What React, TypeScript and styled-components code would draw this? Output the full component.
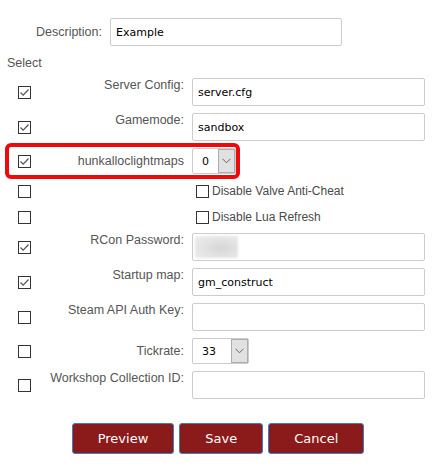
import React from "react";
import styled, { createGlobalStyle } from "styled-components";

type Field = {
  checked: boolean;
  label?: string;
  kind: "text" | "password" | "select" | "toggle";
  value?: string;
  width?: number;
  highlight?: boolean;
};

const fields: Field[] = [
  { checked: true, label: "Server Config:", kind: "text", value: "server.cfg" },
  { checked: true, label: "Gamemode:", kind: "text", value: "sandbox" },
  { checked: true, label: "hunkalloclightmaps", kind: "select", value: "0", width: 44, highlight: true },
  { checked: false, label: "Disable Valve Anti-Cheat", kind: "toggle" },
  { checked: false, label: "Disable Lua Refresh", kind: "toggle" },
  { checked: true, label: "RCon Password:", kind: "password" },
  { checked: true, label: "Startup map:", kind: "text", value: "gm_construct" },
  { checked: false, label: "Steam API Auth Key:", kind: "text", value: "" },
  { checked: false, label: "Tickrate:", kind: "select", value: "33", width: 57 },
  { checked: false, label: "Workshop Collection ID:", kind: "text", value: "" },
];

const CheckBox = ({ checked }: { checked: boolean }) => (
  <Box>
    {checked && (
      <svg width="11" height="11" viewBox="0 0 11 11">
        <polyline points="1.5,5.5 4.2,8.2 9.5,2.5" fill="none" stroke="#555" strokeWidth="1.2" />
      </svg>
    )}
  </Box>
);

const Chevron = () => (
  <svg width="9" height="6" viewBox="0 0 9 6">
    <polyline points="0.5,0.8 4.5,4.8 8.5,0.8" fill="none" stroke="#666" strokeWidth="1" />
  </svg>
);

const App = () => {
  return (
    <Page>
      <GlobalStyle />
      <DescRow>
        <Label $center>Description:</Label>
        <TextInput $w={232} defaultValue="Example" />
      </DescRow>
      <Heading>Select</Heading>
      {fields.map((f) => {
        const RowEl = f.highlight ? HighlightRow : Row;
        return (
          <RowEl key={f.label} $short={f.kind === "toggle"}>
            <CheckCell>
              <CheckBox checked={f.checked} />
            </CheckCell>
            {f.kind === "toggle" ? (
              <>
                <span />
                <Toggle>
                  <CheckBox checked={false} />
                  <span>{f.label}</span>
                </Toggle>
              </>
            ) : (
              <>
                <Label $center={f.kind === "select"}>{f.label}</Label>
                {f.kind === "text" && <TextInput $w={233} defaultValue={f.value} />}
                {f.kind === "password" && (
                  <PasswordBox>
                    <Blur />
                  </PasswordBox>
                )}
                {f.kind === "select" && (
                  <SelectBox $w={f.width ?? 50}>
                    <SelectValue>{f.value}</SelectValue>
                    <SelectArrow>
                      <Chevron />
                    </SelectArrow>
                  </SelectBox>
                )}
              </>
            )}
          </RowEl>
        );
      })}
      <ButtonBar>
        <Button>Preview</Button>
        <Button>Save</Button>
        <Button>Cancel</Button>
      </ButtonBar>
    </Page>
  );
};

export default App;

const GlobalStyle = createGlobalStyle`
  html, body {
    margin: 0;
    padding: 0;
    background: #fff;
  }
  body {
    font-family: "Liberation Sans", Arial, sans-serif;
  }
`;

const Page = styled.div`
  width: 436px;
  height: 469px;
  display: flex;
  flex-direction: column;
  padding-top: 18px;
  box-sizing: border-box;
`;

const DescRow = styled.div`
  display: grid;
  grid-template-columns: 102px 232px;
  column-gap: 8px;
  align-items: center;
`;

const Heading = styled.div`
  margin: 10px 0 7px 7px;
  font-size: 12.5px;
  line-height: 15px;
  color: #555;
`;

const Row = styled.div<{ $short?: boolean }>`
  display: grid;
  grid-template-columns: 40px 136px 233px;
  column-gap: 8px;
  align-items: center;
  margin-bottom: ${({ $short }) => ($short ? "6px" : "7px")};
  min-height: ${({ $short }) => ($short ? "20px" : "0")};
  position: relative;
`;

const HighlightRow = styled(Row)`
  &::after {
    content: "";
    position: absolute;
    left: 5px;
    top: -5px;
    width: 235px;
    height: 36px;
    box-sizing: border-box;
    border: 4px solid #ee0a0a;
    border-radius: 6px;
    pointer-events: none;
  }
`;

const CheckCell = styled.div`
  display: flex;
  justify-content: center;
  padding-left: 9px;
`;

const Box = styled.span`
  width: 13px;
  height: 13px;
  box-sizing: border-box;
  border: 1px solid #333;
  background: #fff;
  display: flex;
  align-items: center;
  justify-content: center;
`;

const Label = styled.label<{ $center?: boolean }>`
  text-align: right;
  align-self: ${({ $center }) => ($center ? "center" : "start")};
  font-size: 12.5px;
  line-height: 15px;
  color: #555;
  white-space: nowrap;
`;

const TextInput = styled.input<{ $w: number }>`
  width: ${({ $w }) => $w}px;
  height: 28px;
  box-sizing: border-box;
  border: 1px solid #ccc;
  border-radius: 2px;
  padding: 0 5px;
  font-family: "DejaVu Sans", Verdana, sans-serif;
  font-size: 11px;
  color: #000;
  background: #fff;
  outline: none;
`;

const PasswordBox = styled.div`
  width: 233px;
  height: 28px;
  box-sizing: border-box;
  border: 1px solid #ccc;
  border-radius: 2px;
  padding: 2px;
  display: flex;
`;

const Blur = styled.span`
  width: 43px;
  height: 22px;
  background: radial-gradient(ellipse at 60% 55%, #d6d6d6 0%, #e2e2e2 45%, #eeeeee 100%);
  filter: blur(0.8px);
`;

const SelectBox = styled.div<{ $w: number }>`
  width: ${({ $w }) => $w}px;
  height: 26px;
  box-sizing: border-box;
  border: 1px solid #ccc;
  border-radius: 2px;
  display: flex;
  background: #fff;
`;

const SelectValue = styled.span`
  flex: 1;
  padding-left: 9px;
  display: flex;
  align-items: center;
  font-family: "DejaVu Sans", Verdana, sans-serif;
  font-size: 11px;
  color: #000;
`;

const SelectArrow = styled.span`
  width: 17px;
  box-sizing: border-box;
  background: #e1e1e1;
  border: 1px solid #adadad;
  display: flex;
  align-items: center;
  justify-content: center;
`;

const Toggle = styled.label`
  display: flex;
  align-items: center;
  gap: 3px;
  margin-left: 4px;
  font-size: 12px;
  line-height: 15px;
  color: #4a4a4a;
  white-space: nowrap;
`;

const ButtonBar = styled.div`
  display: flex;
  justify-content: center;
  gap: 5px;
  margin-top: 17px;
`;

const Button = styled.button`
  height: 31px;
  padding: 0 25px;
  background: #8b1a1a;
  color: #fff;
  border: 1px solid #3f7cc4;
  border-radius: 3px;
  font-family: "DejaVu Sans", Verdana, sans-serif;
  font-size: 13px;
  cursor: pointer;
`;
